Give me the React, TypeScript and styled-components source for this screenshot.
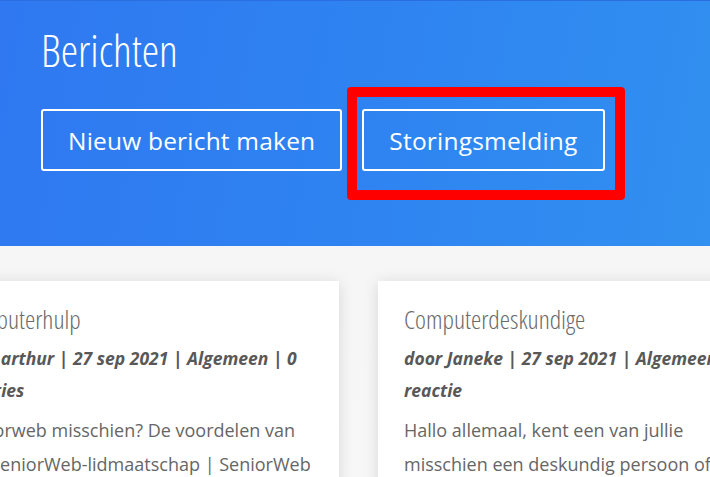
import React from "react";
import styled, { createGlobalStyle } from "styled-components";

const GlobalStyle = createGlobalStyle`
  html, body {
    margin: 0;
    padding: 0;
    width: 710px;
    height: 477px;
    overflow: hidden;
    background: #f4f4f4;
    font-family: "Open Sans", "Noto Sans", sans-serif;
  }
  * { box-sizing: border-box; }
`;

const Page = styled.div`
  width: 710px;
  height: 477px;
  overflow: hidden;
  display: flex;
  flex-direction: column;
  background: linear-gradient(180deg, #f1f1f1 0%, #f6f6f6 60%, #f7f7f7 100%);
`;

const Header = styled.header`
  flex: 0 0 246px;
  padding: 21px 0 0 41px;
  border-top: 1px solid #2a6ee0;
  background: linear-gradient(100deg, #2f78f1 0%, #2f84f1 55%, #3190f0 100%);
`;

const PageTitle = styled.h1`
  margin: 0;
  font-family: "Open Sans", sans-serif;
  font-stretch: 75%;
  font-weight: 300;
  font-size: 44px;
  line-height: 56px;
  color: #ffffff;
`;

const Actions = styled.div`
  display: flex;
  gap: 20px;
  margin-top: 31px;
`;

const ActionWrap = styled.div`
  position: relative;
`;

const ActionButton = styled.button`
  height: 62px;
  padding: 0 25px;
  border: 2px solid #ffffff;
  border-radius: 3px;
  background: transparent;
  color: #ffffff;
  font-family: "Open Sans", sans-serif;
  font-size: 24.5px;
  font-weight: 400;
  letter-spacing: 0.2px;
  cursor: pointer;
`;

/* red annotation frame drawn over the second button */
const Highlight = styled.span`
  position: absolute;
  left: -15px;
  top: -22px;
  right: -20px;
  bottom: -29px;
  border: 10px solid #ff0000;
  border-radius: 4px;
  pointer-events: none;
`;

const Cards = styled.section`
  display: flex;
  gap: 39px;
  margin: 35px 0 0 -68px;
`;

const Card = styled.article`
  flex: 0 0 407px;
  min-height: 260px;
  padding: 20px 26px;
  background: #ffffff;
  box-shadow: 0 2px 14px rgba(0, 0, 0, 0.13);
`;

const CardTitle = styled.h2`
  margin: 0 0 6px;
  font-family: "Open Sans", sans-serif;
  font-stretch: 75%;
  font-weight: 300;
  font-size: 26px;
  line-height: 36px;
  color: #6a6a6a;
`;

const Meta = styled.p`
  margin: 0 0 7px;
  font-size: 17.5px;
  line-height: 31.5px;
  font-weight: 700;
  font-style: italic;
  color: #585858;
`;

const Excerpt = styled.p`
  margin: 0;
  font-size: 18px;
  line-height: 34px;
  color: #666666;
`;

const posts = [
  {
    title: "Computerhulp",
    meta: "door arthur | 27 sep 2021 | Algemeen | 0 reacties",
    excerpt:
      "Seniorweb misschien? De voordelen van het SeniorWeb-lidmaatschap | SeniorWeb",
  },
  {
    title: "Computerdeskundige",
    meta: "door Janeke | 27 sep 2021 | Algemeen | 0 reactie",
    excerpt:
      "Hallo allemaal, kent een van jullie misschien een deskundig persoon of",
  },
];

export default function App() {
  return (
    <Page>
      <GlobalStyle />
      <Header>
        <PageTitle>Berichten</PageTitle>
        <Actions>
          <ActionWrap>
            <ActionButton>Nieuw bericht maken</ActionButton>
          </ActionWrap>
          <ActionWrap>
            <ActionButton>Storingsmelding</ActionButton>
            <Highlight />
          </ActionWrap>
        </Actions>
      </Header>
      <Cards>
        {posts.map(post => (
          <Card key={post.title}>
            <CardTitle>{post.title}</CardTitle>
            <Meta>{post.meta}</Meta>
            <Excerpt>{post.excerpt}</Excerpt>
          </Card>
        ))}
      </Cards>
    </Page>
  );
}
